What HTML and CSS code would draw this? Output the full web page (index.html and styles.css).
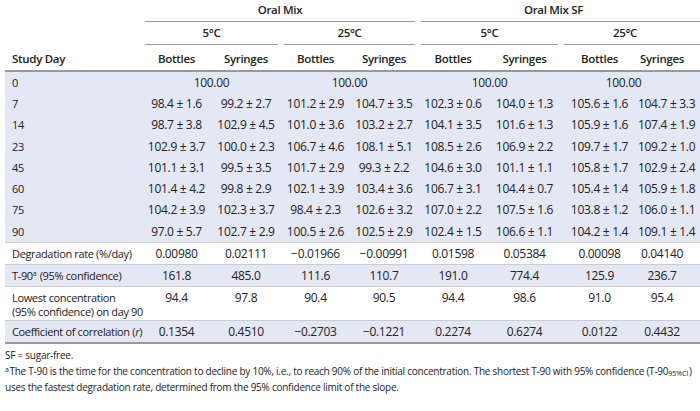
FILE: index.html
```html
<!DOCTYPE html>
<html>
<head>
<meta charset="utf-8">
<link rel="stylesheet" href="styles.css">
</head>
<body>
<div class="page">
<table class="stab">
  <colgroup>
    <col class="c-stub"><col class="c1"><col class="c2"><col class="c3"><col class="c4"><col class="c5"><col class="c6"><col class="c7"><col class="c8">
  </colgroup>
  <thead>
    <tr class="h1">
      <th class="stub"></th>
      <th colspan="4"><div class="grp">Oral Mix</div></th>
      <th colspan="4" class="last"><div class="grp grp-end">Oral Mix SF</div></th>
    </tr>
    <tr class="h2">
      <th class="stub"></th>
      <th colspan="2"><div class="grp">5°C</div></th>
      <th colspan="2"><div class="grp">25°C</div></th>
      <th colspan="2"><div class="grp">5°C</div></th>
      <th colspan="2" class="last"><div class="grp grp-end">25°C</div></th>
    </tr>
    <tr class="h3">
      <th class="stub">Study Day</th>
      <th>Bottles</th><th>Syringes</th>
      <th>Bottles</th><th>Syringes</th>
      <th>Bottles</th><th>Syringes</th>
      <th>Bottles</th><th class="last">Syringes</th>
    </tr>
  </thead>
  <tbody class="data">
    <tr><td class="stub">0</td><td colspan="2">100.00</td><td colspan="2">100.00</td><td colspan="2">100.00</td><td colspan="2" class="last">100.00</td></tr>
    <tr><td class="stub">7</td><td>98.4 ± 1.6</td><td>99.2 ± 2.7</td><td>101.2 ± 2.9</td><td>104.7 ± 3.5</td><td>102.3 ± 0.6</td><td>104.0 ± 1.3</td><td>105.6 ± 1.6</td><td class="last">104.7 ± 3.3</td></tr>
    <tr><td class="stub">14</td><td>98.7 ± 3.8</td><td>102.9 ± 4.5</td><td>101.0 ± 3.6</td><td>103.2 ± 2.7</td><td>104.1 ± 3.5</td><td>101.6 ± 1.3</td><td>105.9 ± 1.6</td><td class="last">107.4 ± 1.9</td></tr>
    <tr><td class="stub">23</td><td>102.9 ± 3.7</td><td>100.0 ± 2.3</td><td>106.7 ± 4.6</td><td>108.1 ± 5.1</td><td>108.5 ± 2.6</td><td>106.9 ± 2.2</td><td>109.7 ± 1.7</td><td class="last">109.2 ± 1.0</td></tr>
    <tr><td class="stub">45</td><td>101.1 ± 3.1</td><td>99.5 ± 3.5</td><td>101.7 ± 2.9</td><td>99.3 ± 2.2</td><td>104.6 ± 3.0</td><td>101.1 ± 1.1</td><td>105.8 ± 1.7</td><td class="last">102.9 ± 2.4</td></tr>
    <tr><td class="stub">60</td><td>101.4 ± 4.2</td><td>99.8 ± 2.9</td><td>102.1 ± 3.9</td><td>103.4 ± 3.6</td><td>106.7 ± 3.1</td><td>104.4 ± 0.7</td><td>105.4 ± 1.4</td><td class="last">105.9 ± 1.8</td></tr>
    <tr><td class="stub">75</td><td>104.2 ± 3.9</td><td>102.3 ± 3.7</td><td>98.4 ± 2.3</td><td>102.6 ± 3.2</td><td>107.0 ± 2.2</td><td>107.5 ± 1.6</td><td>103.8 ± 1.2</td><td class="last">106.0 ± 1.1</td></tr>
    <tr><td class="stub">90</td><td>97.0 ± 5.7</td><td>102.7 ± 2.9</td><td>100.5 ± 2.6</td><td>102.5 ± 2.9</td><td>102.4 ± 1.5</td><td>106.6 ± 1.1</td><td>104.2 ± 1.4</td><td class="last">109.1 ± 1.4</td></tr>
  </tbody>
  <tbody class="summary">
    <tr><td class="stub">Degradation rate (%/day)</td><td>0.00980</td><td>0.02111</td><td>−0.01966</td><td>−0.00991</td><td>0.01598</td><td>0.05384</td><td>0.00098</td><td class="last">0.04140</td></tr>
    <tr class="shade"><td class="stub">T-90<sup>a</sup> (95% confidence)</td><td>161.8</td><td>485.0</td><td>111.6</td><td>110.7</td><td>191.0</td><td>774.4</td><td>125.9</td><td class="last">236.7</td></tr>
    <tr class="tall"><td class="stub">Lowest concentration<br>(95% confidence) on day 90</td><td>94.4</td><td>97.8</td><td>90.4</td><td>90.5</td><td>94.4</td><td>98.6</td><td>91.0</td><td class="last">95.4</td></tr>
    <tr class="shade"><td class="stub">Coefficient of correlation (<i>r</i>)</td><td>0.1354</td><td>0.4510</td><td>−0.2703</td><td>−0.1221</td><td>0.2274</td><td>0.6274</td><td>0.0122</td><td class="last">0.4432</td></tr>
  </tbody>
</table>
<div class="notes">
  <p>SF = sugar-free.</p>
  <p><sup>a</sup>The T-90 is the time for the concentration to decline by 10%, i.e., to reach 90% of the initial concentration. The shortest T-90 with 95% confidence (T-90<sub>95%CI</sub>)<br>uses the fastest degradation rate, determined from the 95% confidence limit of the slope.</p>
</div>
</div>
</body>
</html>
```

FILE: styles.css
```css
html, body {
  margin: 0;
  padding: 0;
  background: #ffffff;
}
body {
  font-family: "Open Sans", "Noto Sans", "Liberation Sans", sans-serif;
  color: #222222;
  overflow: hidden;
}
.page {
  padding-left: 5px;
  width: 695px;
}
.stab {
  width: 695px;
  border-collapse: collapse;
  table-layout: fixed;
  font-size: 12px;
  letter-spacing: -0.3px;
}
.c-stub { width: 137px; }
.c1 { width: 69px; }
.c2 { width: 70px; }
.c3 { width: 69px; }
.c4 { width: 68px; }
.c5 { width: 70px; }
.c6 { width: 73px; }
.c7 { width: 77px; }
.c8 { width: 62px; }

.stab th, .stab td {
  padding: 0;
  text-align: center;
  white-space: nowrap;
  line-height: 14px;
}
.stab th {
  font-weight: 600;
  font-size: 11.5px;
  letter-spacing: -0.3px;
}
.stab td.stub {
  font-size: 11px;
  letter-spacing: -0.35px;
}
.stab .stub {
  text-align: left;
  padding-left: 7px;
}
.stab .last {
  padding-right: 14px;
}
.stab th.last {
  padding-right: 0;
}
.grp {
  margin: 0 3px;
  border-bottom: 1px solid #9a9a9a;
}
.grp-end {
  margin-right: 0;
  padding-right: 14px;
}
.h1 .grp {
  padding-top: 3px;
  padding-bottom: 4px;
}
.h2 .grp {
  padding-top: 4px;
  padding-bottom: 4px;
}
.h3 th {
  padding-top: 7px;
  padding-bottom: 4px;
  border-bottom: 2px solid #9a9a9a;
}
.h3 th.last {
  padding-right: 14px;
}
.data tr {
  background: #e4e7f4;
}
.data td {
  height: 21.3px;
}
.summary td {
  height: 21px;
  border-top: 1px solid #cccccc;
}
.summary tr.shade {
  background: #e4e7f4;
}
.summary tr.tall td {
  height: 29px;
  vertical-align: top;
  padding-top: 4px;
}
.summary tr:last-child td {
  border-bottom: 2px solid #9a9a9a;
}
sup {
  font-size: 7px;
  vertical-align: 4px;
  line-height: 0;
  letter-spacing: 0;
  padding-right: 0.5px;
}
sub {
  font-size: 7px;
  vertical-align: -1px;
  line-height: 0;
  letter-spacing: 0;
  padding-right: 0.5px;
}
.notes {
  font-size: 10px;
  letter-spacing: -0.25px;
  line-height: 16px;
  margin-top: 3px;
}
.notes sup {
  vertical-align: 3px;
}
.notes p {
  margin: 0;
}
```
